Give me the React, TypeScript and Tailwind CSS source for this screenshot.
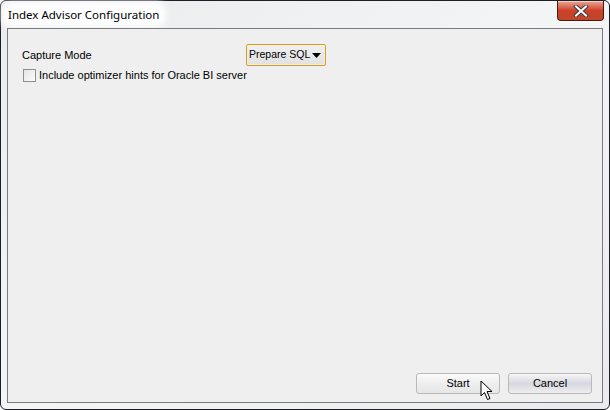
import React from 'react';

const CloseButton: React.FC = () => (
  <div className="w-[47px] h-[20px] rounded-b-[4px] border border-t-0 border-[#4a1a12] bg-gradient-to-b from-[#e9a593] via-[#cc4128] to-[#c0452c] flex items-center justify-center shadow-[inset_0_1px_0_rgba(255,255,255,0.5)]">
    <svg width="16" height="12" viewBox="0 0 16 12">
      <path d="M3 1.5 L13 10.5 M13 1.5 L3 10.5" stroke="#3d3d4a" strokeWidth="4" strokeLinecap="square" />
      <path d="M3 1.5 L13 10.5 M13 1.5 L3 10.5" stroke="#ffffff" strokeWidth="2" strokeLinecap="square" />
    </svg>
  </div>
);

const Cursor: React.FC = () => (
  <svg width="14" height="22" viewBox="0 0 14 22" className="absolute left-[480px] top-[380px]">
    <path d="M1 1 L1 16 L4.5 12.5 L7.5 19.5 L10 18.5 L7 11.5 L12 11.5 Z" fill="#ffffff" stroke="#000000" strokeWidth="1" strokeLinejoin="miter" />
  </svg>
);

const DialogButton: React.FC<{ label: string; hot?: boolean }> = ({ label, hot }) => (
  <button
    className={
      hot
        ? 'w-[84px] h-[21px] rounded-[3px] border border-[#b9b9b9] bg-gradient-to-b from-[#f7f7f7] via-[#d7d7e0] to-[#eeeeee] text-[11px] text-black'
        : 'w-[84px] h-[21px] rounded-[3px] border border-[#b9b9b9] bg-gradient-to-b from-[#fbfbfb] via-[#eeeeee] to-[#e6e6e6] text-[11px] text-black'
    }
  >
    {label}
  </button>
);

const App: React.FC = () => {
  return (
    <div className="w-[610px] h-[410px] relative font-['Liberation_Sans',Arial,sans-serif]">
      <div className="w-[610px] h-[410px] rounded-[6px] border border-[#1e1e28] bg-gradient-to-br from-[#e9ebee] via-[#f4f5f6] to-[#e9ebee] flex flex-col px-[6px] pb-[6px]">
        {/* Title bar */}
        <div className="h-[27px] flex items-start justify-between">
          <div className="mt-[4px] -ml-[2px] px-[3px] h-[19px] flex items-center bg-white/90 rounded-[6px] shadow-[0_0_6px_4px_rgba(255,255,255,0.9)]">
            <span className="text-[11.5px] text-black font-['Noto_Sans',sans-serif]">Index Advisor Configuration</span>
          </div>
          <div className="mr-[-1px]">
            <CloseButton />
          </div>
        </div>

        {/* Client area */}
        <div className="flex-1 border border-[#7b7b7b] bg-[#efefef] flex flex-col text-[11px] text-black">
          <div className="flex flex-col pl-[14px] pt-[15px]">
            <div className="flex items-center h-[22px]">
              <span className="w-[224px]">Capture Mode</span>
              <div className="w-[80px] h-[22px] rounded-[2px] border border-[#d39a3a] bg-[#fff1c8] p-[1px]">
                <div className="w-full h-full bg-gradient-to-b from-[#f0f0f0] to-[#e2e2e2] flex items-center justify-between pl-[1px] whitespace-nowrap">
                  <span className="text-[10.5px]">Prepare SQL</span>
                  <svg width="9" height="5" viewBox="0 0 9 5" className="mr-[3px] shrink-0">
                    <path d="M0 0 L9 0 L4.5 5 Z" fill="#000000" />
                  </svg>
                </div>
              </div>
            </div>
            <div className="flex items-center h-[14px] mt-[2px] ml-[1px]">
              <div className="w-[13px] h-[13px] border border-[#8e8f8f] bg-gradient-to-br from-[#e6e6e6] to-[#fbfbfb]" />
              <span className="ml-[3px]">Include optimizer hints for Oracle BI server</span>
            </div>
          </div>
          <div className="flex-1" />
          <div className="flex justify-end gap-[8px] pr-[10px] pb-[8px]">
            <DialogButton label="Start" />
            <DialogButton label="Cancel" hot />
          </div>
        </div>
      </div>
      <Cursor />
    </div>
  );
};

export default App;
